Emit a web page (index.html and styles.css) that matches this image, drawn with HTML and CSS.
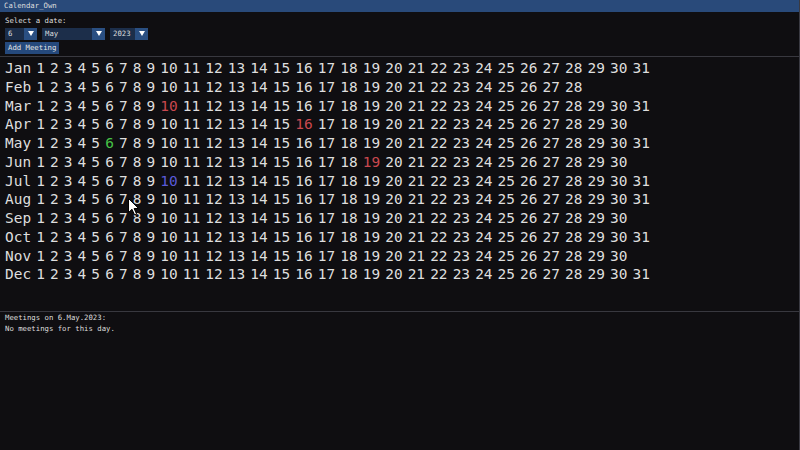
FILE: index.html
```html
<!DOCTYPE html>
<html lang="en">
<head>
  <meta charset="UTF-8" />
  <title>Calendar_Own</title>
  <link rel="stylesheet" href="styles.css">
</head>
<body>
  <div class="window">
    <div class="titlebar">Calendar_Own</div>

    <div class="top">
      <div class="label">Select a date:</div>
      <div class="combos">
        <div class="combo combo-day">
          <span class="combo-value">6</span>
          <span class="combo-arrow"><svg width="6" height="5" viewBox="0 0 6 5"><polygon points="0,0 6,0 3,5" fill="#fff"/></svg></span>
        </div>
        <div class="combo combo-month">
          <span class="combo-value">May</span>
          <span class="combo-arrow"><svg width="6" height="5" viewBox="0 0 6 5"><polygon points="0,0 6,0 3,5" fill="#fff"/></svg></span>
        </div>
        <div class="combo combo-year">
          <span class="combo-value">2023</span>
          <span class="combo-arrow"><svg width="6" height="5" viewBox="0 0 6 5"><polygon points="0,0 6,0 3,5" fill="#fff"/></svg></span>
        </div>
      </div>
      <button class="btn">Add Meeting</button>
    </div>

    <div class="sep"></div>
    <div class="calendar" id="calendar"></div>
    <div class="sep"></div>

    <div class="meetings">
      <div>Meetings on 6.May.2023:</div>
      <div>No meetings for this day.</div>
    </div>

    <svg class="cursor" width="12" height="18" viewBox="0 0 12 18">
      <path d="M0.5 0.5 L0.5 14.5 L4 11.3 L6.6 17 L8.6 16.1 L6.1 10.5 L10.6 10.5 Z" fill="#fff" stroke="#000" stroke-width="1"/>
    </svg>
  </div>

  <script>
    const months = [
      ['Jan', 31], ['Feb', 28], ['Mar', 31], ['Apr', 30],
      ['May', 31], ['Jun', 30], ['Jul', 31], ['Aug', 31],
      ['Sep', 30], ['Oct', 31], ['Nov', 30], ['Dec', 31]
    ];

    // days with something going on
    const marks = {
      'Mar-10': 'red',
      'Apr-16': 'red',
      'Jun-19': 'red',
      'May-6': 'green',
      'Jul-10': 'blue'
    };

    const calendar = document.getElementById('calendar');

    months.forEach(([name, days]) => {
      const row = document.createElement('div');
      row.className = 'row';

      const label = document.createElement('span');
      label.innerText = name;
      row.appendChild(label);

      for (let d = 1; d <= days; d++) {
        const day = document.createElement('span');
        day.innerText = d;
        const mark = marks[name + '-' + d];
        if (mark) day.className = mark;
        row.appendChild(day);
      }

      calendar.appendChild(row);
    });
  </script>
</body>
</html>
```

FILE: styles.css
```css
body {
  margin: 0;
  background: #0f0e11;
  color: #dedede;
  font-family: "DejaVu Sans Mono", "Liberation Mono", monospace;
}

.window {
  position: relative;
  width: 800px;
  height: 450px;
  box-sizing: border-box;
  border-right: 1px solid #3a3a42;
  overflow: hidden;
}

.titlebar {
  height: 12px;
  background: #294a7a;
  font-size: 7.3px;
  line-height: 12px;
  padding-left: 4px;
}

.top {
  padding: 5px 5px 0;
}

.label {
  font-size: 7.3px;
  line-height: 8px;
  height: 8px;
}

.combos {
  display: flex;
  gap: 5px;
  margin-top: 2.5px;
}

.combo {
  display: flex;
  height: 12px;
  background: #1c2e4a;
}

.combo-day { width: 32px; }
.combo-month { width: 63px; }
.combo-year { width: 38px; }

.combo-value {
  flex: 1;
  padding-left: 3px;
  font-size: 7.3px;
  line-height: 12px;
}

.combo-arrow {
  width: 13px;
  background: #2a4f82;
  display: flex;
  align-items: center;
  justify-content: center;
}

.btn {
  display: block;
  margin-top: 2.5px;
  height: 12px;
  padding: 0 3px;
  border: none;
  background: #25497c;
  color: #e4e4e4;
  font-family: inherit;
  font-size: 7.3px;
  line-height: 12px;
}

.sep {
  height: 1px;
  background: #38383f;
  margin-top: 2px;
}

.calendar {
  height: 252px;
  box-sizing: border-box;
  padding: 2.2px 5px 0;
  font-size: 14.45px;
  line-height: 18.75px;
}

.row {
  display: flex;
  gap: 5.1px;
  white-space: nowrap;
}

.row .red { color: #c9484f; }
.row .green { color: #47c447; }
.row .blue { color: #5a5ad8; }

.meetings {
  padding: 1px 5px 0;
  font-size: 7.3px;
  line-height: 10.6px;
}

.cursor {
  position: absolute;
  left: 127.5px;
  top: 198px;
}
```
